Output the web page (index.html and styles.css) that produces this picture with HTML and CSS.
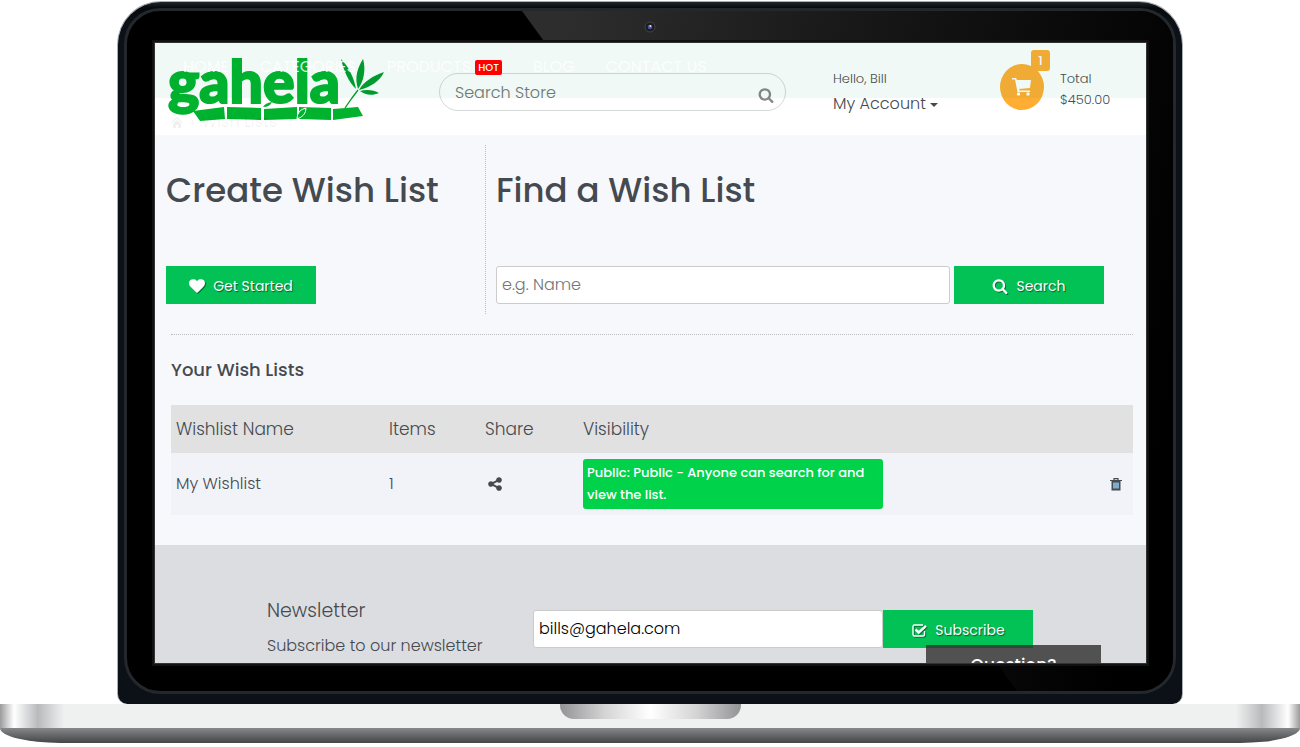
FILE: index.html
```html
<!DOCTYPE html>
<html lang="en">
<head>
    <meta charset="UTF-8">
    <meta name="viewport" content="width=device-width, initial-scale=1.0">
    <title>Wish Lists</title>
    <link rel="stylesheet" href="styles.css">
</head>
<body>
    <div class="laptop">
        <div class="lid">
            <div class="bezel">
                <div class="glare"></div>
                <svg class="camera" viewBox="0 0 12 12"><circle cx="6" cy="6" r="5" fill="#1c1c1e" stroke="#444" stroke-width="1"/><circle cx="6" cy="6" r="2.3" fill="#4a51a8"/><circle cx="6.4" cy="5" r="1" fill="#d5dcff"/></svg>
                <div class="screen">
                    <header class="header">
                        <a class="logo" href="#" aria-label="gahela">
                            <svg viewBox="0 0 216 68">
                                <g fill="#00b22d">
                                    <path d="M25 56L56 52l1 12-25 2zM59 52l34 1v12l-34-1zM96 54l33-2v12l-33 1zM131 52l32 1v12l-32-1zM165 54l25-2 5 9-30 4z"/>
                                    <text x="0" y="48" class="logo-text">gahela</text>
                                    <path d="M95 52q2-4 9-5-2 5-9 5z"/>
                                </g>
                                <path d="M129 64q0-9 9-11 0 8-9 11z" fill="#00b22d" stroke="#fff"/>
                                <g fill="#009c2c">
                                    <path d="M188 34C180 26 176 16 173 4c8 8 13 19 15 30z"/>
                                    <path d="M190 34c-4-12 0-22 5-30 3 10 1 22-5 30z"/>
                                    <path d="M191 35c5-9 14-14 25-18-4 9-13 15-25 18z"/>
                                    <path d="M192 36c7-2 14-1 19 2-7 3-14 2-19-2z"/>
                                    <path d="M190 35l-6 8-7 10" fill="none" stroke="#009c2c" stroke-width="1.3"/>
                                </g>
                            </svg>
                        </a>
                        <form class="store-search">
                            <input type="text" placeholder="Search Store" aria-label="Search Store">
                            <button type="button" aria-label="Search">
                                <svg class="icon" viewBox="0 0 1792 1792"><use href="#i-search"/></svg>
                            </button>
                        </form>
                        <div class="account">
                            <span class="small">Hello, Bill</span>
                            <a href="#">My Account<i class="caret"></i></a>
                        </div>
                        <a class="cart" href="#" aria-label="Cart">
                            <svg viewBox="0 0 20 18"><path d="M0 0h4l1 2h14l-1 8-11 1 .5 1.500H18V14H5.500L3 1.600H0z" fill="#fff"/><circle cx="6.500" cy="16" r="1.700" fill="#fff"/><circle cx="16" cy="16" r="1.700" fill="#fff"/></svg>
                            <span class="count">1</span>
                        </a>
                        <div class="total small">
                            <span>Total</span>
                            <span>$450.00</span>
                        </div>
                        <nav class="menu">
                            <a href="#">HOME</a>
                            <a href="#">CATEGORIES</a>
                            <a href="#">PRODUCTS <b class="hot">HOT</b></a>
                            <a href="#">BLOG</a>
                            <a href="#">CONTACT US</a>
                        </nav>
                        <div class="crumbs">
                            <svg viewBox="0 0 12 11"><path d="M6 0l6 5.500-.8.8L6 1.800.8 6.300 0 5.500zM2 6.500L6 3l4 3.500V11H7V8H5v3H2z" fill="currentColor"/></svg>
                            <span>›</span>
                            <span>Wish Lists</span>
                        </div>
                    </header>

                    <main>
                        <div class="panels">
                            <section class="create">
                                <h1>Create Wish List</h1>
                                <button type="button" class="btn"><svg class="icon" viewBox="0 0 1792 1792"><use href="#i-heart"/></svg>Get Started</button>
                            </section>
                            <section class="find">
                                <h1>Find a Wish List</h1>
                                <form class="find-form">
                                    <input type="text" class="field" placeholder="e.g. Name" aria-label="Name">
                                    <button type="button" class="btn"><svg class="icon" viewBox="0 0 1792 1792"><use href="#i-search"/></svg>Search</button>
                                </form>
                            </section>
                        </div>
                        <section class="lists">
                            <h2>Your Wish Lists</h2>
                            <table>
                                <thead>
                                    <tr>
                                        <th class="col-name">Wishlist Name</th>
                                        <th class="col-items">Items</th>
                                        <th class="col-share">Share</th>
                                        <th>Visibility</th>
                                        <th class="col-delete"></th>
                                    </tr>
                                </thead>
                                <tbody>
                                    <tr>
                                        <td>My Wishlist</td>
                                        <td>1</td>
                                        <td class="share"><a href="#" aria-label="Share"><svg class="icon" viewBox="0 0 1792 1792"><path d="M1344 1024q133 0 226.500 93.500t93.500 226.500-93.500 226.500-226.500 93.500-226.500-93.500-93.500-226.500q0-12 2-34l-360-180q-92 86-218 86-133 0-226.500-93.500t-93.500-226.500 93.500-226.500 226.500-93.500q126 0 218 86l360-180q-2-22-2-34 0-133 93.500-226.500t226.500-93.500 226.500 93.500 93.500 226.500-93.500 226.500-226.500 93.500q-126 0-218-86l-360 180q2 22 2 34t-2 34l360 180q92-86 218-86z"/></svg></a></td>
                                        <td><span class="tag">Public: Public - Anyone can search for and view the list.</span></td>
                                        <td><button type="button" class="trash" aria-label="Delete"><svg viewBox="0 0 12 13"><path d="M1.500 3h9v9.500h-9z" fill="#454a50"/><path d="M4 4.500v6M6 4.500v6M8 4.500v6" stroke="#8fc4ea" stroke-width="1.600"/><path d="M0 2.500h12M4 2V.6h4V2" fill="none" stroke="#454a50" stroke-width="1.200"/></svg></button></td>
                                    </tr>
                                </tbody>
                            </table>
                        </section>
                    </main>

                    <footer class="footer">
                        <div class="newsletter">
                            <h3>Newsletter</h3>
                            <label for="email">Subscribe to our newsletter</label>
                        </div>
                        <form class="subscribe">
                            <input type="text" id="email" class="field" value="bills@gahela.com">
                            <button type="button" class="btn"><svg class="icon" viewBox="0 0 16 16"><path d="M13.500 9v3.500q0 1.500-1.500 1.500H3.500Q2 14 2 12.500v-8Q2 3 3.500 3H12" fill="none" stroke="#fff" stroke-width="1.400"/><path d="M4.500 7.500l3.200 3L15 3.800" fill="none" stroke="#fff" stroke-width="2.400"/></svg>Subscribe</button>
                        </form>
                    </footer>
                    <button type="button" class="question">Question?</button>
                </div>
            </div>
        </div>
        <div class="base">
            <div class="notch"></div>
        </div>
        <div class="foot"></div>
    </div>

    <svg class="sprite">
        <symbol id="i-search" viewBox="0 0 1792 1792"><path d="M1216 832q0-185-131.500-316.500t-316.500-131.500-316.500 131.500-131.500 316.500 131.500 316.500 316.500 131.500 316.500-131.500 131.500-316.500zm512 832q0 52-38 90t-90 38q-54 0-90-38l-343-342q-179 124-399 124-143 0-273.500-55.500t-225-150-150-225-55.500-273.500 55.500-273.500 150-225 225-150 273.500-55.500 273.500 55.500 225 150 150 225 55.500 273.500q0 220-124 399l343 343q37 37 37 90z"/></symbol>
        <symbol id="i-heart" viewBox="0 0 1792 1792"><path d="M896 1664q-26 0-44-18l-624-602q-10-8-27.500-26t-55.500-65.500-68-97.500-53.500-121-23.500-138q0-220 127-344t351-124q62 0 126.500 21.500t120 58 95.500 68.500 76 68q36-36 76-68t95.500-68.500 120-58 126.500-21.500q224 0 351 124t127 344q0 221-229 450l-623 600q-18 18-44 18z"/></symbol>
    </svg>
</body>
</html>
```
FILE: styles.css
```css
* {
    box-sizing: border-box;
}
body {
    margin: 0;
    background-color: #ffffff;
    font-family: 'Poppins', 'Inter', sans-serif;
    font-size: 16px;
    font-weight: 300;
    line-height: 24px;
    color: #454a50;
}
a {
    color: inherit;
    text-decoration: none;
}
h1, h2, h3 {
    margin: 0;
    font-weight: 500;
}
input, button {
    font: inherit;
    color: inherit;
}
button {
    border: none;
    padding: 0;
    background: none;
    cursor: pointer;
}
.sprite {
    display: none;
}
.icon {
    width: 16px;
    height: 16px;
    fill: currentColor;
}

/* laptop frame */
.laptop {
    padding-top: 1px;
}
.lid {
    margin: 0 9%;
    padding: 6px 6px 10px;
    border: 1px solid #a9aeb3;
    border-bottom: none;
    border-radius: 44px 44px 10px 10px;
    background: linear-gradient(#1f262c, #05090c 6px, #0b1116 20px);
}
.bezel {
    position: relative;
    padding: 32px 27px 28px 28px;
    border: 3px solid #24282d;
    border-radius: 36px;
    background-color: #000000;
}
.glare {
    position: absolute;
    inset: 0;
    border-radius: 33px;
    background: linear-gradient(100deg, #2d2d2d 38%, #151515 66%, #000000 95%);
    clip-path: polygon(395px 0, 100% 0, 100% 100%, 890px 100%);
}
.camera {
    position: absolute;
    top: 10px;
    left: 50%;
    width: 12px;
    margin-left: -6px;
}
.screen {
    position: relative;
    aspect-ratio: 991 / 620;
    overflow: hidden;
    background-color: #f7f8fc;
    box-shadow: 0 0 0 1px #333333, 0 0 0 3px #111111;
}
.base {
    height: 24px;
    background: linear-gradient(90deg, #9b9b9d, #ffffff 14px, #b9babc 38px, #eff1f1 64px, #eff1f1 calc(100% - 64px), #b9babc calc(100% - 38px), #ffffff calc(100% - 12px), #9b9b9d);
}
.notch {
    width: 181px;
    height: 15px;
    margin: 0 auto;
    border-radius: 0 0 14px 14px;
    background: linear-gradient(90deg, #939395, #d5d5d6 25%, #ffffff 50%, #d5d5d6 75%, #939395);
}
.foot {
    height: 15px;
    border-radius: 0 0 60px 60px / 0 0 15px 15px;
    background: linear-gradient(#86888a, #444446);
}

/* store header */
.header {
    position: relative;
    display: flex;
    height: 92px;
    padding: 0 13px;
    background-color: #ffffff;
}
.logo, .account, .cart, .total {
    flex-shrink: 0;
}
.logo {
    width: 216px;
    margin: 12px 55px 0 0;
}
.logo svg {
    display: block;
    overflow: visible;
}
.logo-text {
    font-family: 'Lato', sans-serif;
    font-size: 59px;
    font-weight: 900;
    stroke: #00b22d;
    stroke-width: 2px;
}
.store-search {
    flex: 1;
    display: flex;
    min-width: 0;
    height: 38px;
    margin: 30px 47px 0 0;
    padding: 0 11px 0 15px;
    border: 1px solid #d5d9d9;
    border-radius: 19px;
}
.store-search input {
    flex: 1;
    min-width: 0;
    padding: 2px 0 0;
    border: none;
    background: none;
}
.store-search button {
    padding-top: 12px;
    color: #858585;
}
input::placeholder {
    color: #757575;
    opacity: 1;
}
.small {
    font-size: 13px;
}
.account {
    display: flex;
    flex-direction: column;
    gap: 1px;
    width: 167px;
    padding-top: 24px;
}
.caret {
    display: inline-block;
    margin-left: 4px;
    border: 4px solid transparent;
    border-top-color: #454a50;
    border-bottom: none;
    vertical-align: middle;
}
.cart {
    position: relative;
    display: flex;
    align-items: center;
    justify-content: center;
    width: 44px;
    height: 46px;
    margin: 21px 16px 0 0;
    border-radius: 50%;
    background-color: #ffad33;
}
.cart svg {
    width: 20px;
}
.count {
    position: absolute;
    top: -14px;
    right: -6px;
    width: 19px;
    border-radius: 3px;
    background-color: #ffad33;
    color: #ffffff;
    font-size: 13px;
    font-weight: 500;
    line-height: 21px;
    text-align: center;
}
.total {
    display: flex;
    flex-direction: column;
    width: 73px;
    padding-top: 25px;
    line-height: 21px;
}
.menu {
    position: absolute;
    inset: 0 0 auto;
    display: flex;
    gap: 31px;
    height: 55px;
    padding: 12px 28px;
    background-color: rgba(0, 160, 90, 0.06);
    color: rgba(255, 255, 255, 0.85);
    font-weight: 400;
    pointer-events: none;
}
.hot {
    display: inline-block;
    padding: 0 3px;
    border-radius: 2px;
    background-color: #ff0000;
    color: #ffffff;
    font-size: 10px;
    font-weight: 500;
    line-height: 15px;
    vertical-align: middle;
}
.crumbs {
    position: absolute;
    top: 67px;
    left: 16px;
    display: flex;
    gap: 7px;
    align-items: center;
    color: rgba(0, 0, 0, 0.06);
    font-weight: 400;
}
.crumbs svg {
    width: 12px;
}

/* wish list panels */
.panels {
    display: flex;
    padding: 10px 12px 20px 0;
}
.create, .find {
    padding: 20px 10px 10px;
}
.create {
    width: 331px;
    padding-left: 11px;
    border-right: 1px dotted #bbbbbb;
}
.find {
    flex: 1;
    padding-right: 30px;
}
h1 {
    margin-bottom: 51px;
    font-size: 34px;
    line-height: 50px;
}
.find-form {
    display: flex;
    gap: 4px;
}
.field {
    flex: 1;
    min-width: 0;
    height: 38px;
    padding: 0 5px 2px;
    border: 1px solid #cccccc;
    border-radius: 3px;
    background-color: #ffffff;
}
.btn {
    display: flex;
    align-items: center;
    justify-content: center;
    gap: 8px;
    width: 150px;
    height: 38px;
    padding-top: 2px;
    background-color: #03c255;
    color: #ffffff;
    font-size: 14px;
    font-weight: 400;
    text-shadow: 1px 1px 1px rgba(0, 0, 0, 0.5);
}
.btn .icon {
    filter: drop-shadow(1px 1px 0 rgba(0, 0, 0, 0.4));
}
.lists {
    margin: 0 13px 0 16px;
    padding-bottom: 30px;
    border-top: 1px dotted #bbbbbb;
}
h2 {
    padding: 20px 0;
    font-size: 18px;
    line-height: 30px;
}
table {
    width: 100%;
    border-collapse: collapse;
    table-layout: fixed;
}
th, td {
    padding: 0 5px;
    text-align: left;
    font-weight: 300;
}
th {
    height: 48px;
    background-color: #e1e1e1;
    font-size: 17px;
}
td {
    height: 62px;
    background-color: #f2f3f8;
}
.col-name {
    width: 213px;
}
.col-items {
    width: 96px;
}
.col-share {
    width: 98px;
}
.col-delete {
    width: 28px;
}
.share .icon {
    display: block;
    margin-left: 2px;
}
.tag {
    display: block;
    max-width: 300px;
    padding: 3px 4px;
    border-radius: 3px;
    background-color: #00d249;
    color: #ffffff;
    font-size: 13px;
    font-weight: 500;
    line-height: 22px;
}
.trash {
    display: block;
    width: 12px;
}
.trash svg {
    display: block;
}

/* newsletter */
.footer {
    display: flex;
    min-height: 160px;
    padding: 50px 113px 0 112px;
    background-color: #dcdde0;
}
.newsletter {
    width: 266px;
    padding-top: 1px;
}
h3 {
    margin-bottom: 8px;
    font-size: 19px;
    font-weight: 300;
    line-height: 30px;
}
.newsletter label {
    display: block;
}
.subscribe {
    flex: 1;
    display: flex;
    padding-top: 15px;
}
.subscribe .field {
    color: #000000;
}
.question {
    position: absolute;
    right: 45px;
    bottom: -22px;
    width: 175px;
    height: 40px;
    background-color: rgba(50, 50, 50, 0.82);
    color: #ffffff;
    font-size: 17px;
    font-weight: 500;
}
```
